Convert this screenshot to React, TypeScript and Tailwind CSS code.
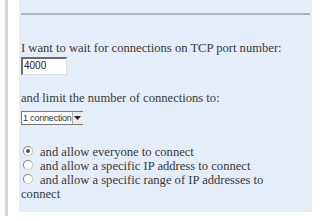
export default function App() {
  return (
    <div className="w-[323px] h-[221px] bg-white flex" style={{ fontFamily: '"Liberation Serif", serif' }}>
      <div className="w-[5px]" />
      <div className="w-[3px] h-[216px] bg-[#d4d4d4]" />
      <div className="w-[11px]" />
      <div className="w-[293px] h-[212px] bg-[#e5edf9] flex flex-col text-[12.6px] leading-[14px] text-[#3a3a3a]">
        <div className="mt-[13px] mx-[2px] h-[2px] bg-[#a9b4c0]" />
        <div className="mt-[26px] pl-[2px] whitespace-nowrap">I want to wait for connections on TCP port number:</div>
        <div className="mt-[2px] ml-[2px] w-[46px] h-[18px] bg-white border-t-[2px] border-l-[2px] border-t-[#6b6b6b] border-l-[#6b6b6b] border-b border-r border-b-[#e0e0e0] border-r-[#e0e0e0] text-[10px] leading-[14px] pl-[1px] text-[#222]" style={{ fontFamily: '"Liberation Sans", sans-serif' }}>
          4000
        </div>
        <div className="mt-[16px] pl-[2px] whitespace-nowrap">and limit the number of connections to:</div>
        <div className="mt-[6px] ml-[2px] w-[62px] h-[14px] bg-white border border-[#7a7a7a] flex items-center text-[9px] leading-[12px] text-[#333]" style={{ fontFamily: '"Liberation Sans", sans-serif' }}>
          <span className="pl-[1px] flex-1 whitespace-nowrap tracking-[-0.2px]">1 connection</span>
          <span className="w-[11px] h-[12px] shrink-0 bg-[#ececec] border-l border-[#b0b0b0] flex items-center justify-center">
            <svg width="7" height="4" viewBox="0 0 7 4"><path d="M0 0h7L3.5 4z" fill="#222" /></svg>
          </span>
        </div>
        <div className="mt-[20px] flex flex-col">
          {[
            'and allow everyone to connect',
            'and allow a specific IP address to connect',
            'and allow a specific range of IP addresses to',
          ].map((t, i) => (
            <div key={i} className="flex items-center h-[14px] pl-[3px] whitespace-nowrap">
              <span className="w-[10px] h-[10px] shrink-0 rounded-full border border-[#c4c4c4] border-t-[#8a8a8a] border-l-[#8a8a8a] bg-white flex items-center justify-center ml-[1px] mr-[7px] mt-[-2px]">
                {i === 0 && <span className="w-[4px] h-[4px] rounded-full bg-[#555]" />}
              </span>
              <span>{t}</span>
            </div>
          ))}
          <div className="pl-[2px]">connect</div>
        </div>
      </div>
    </div>
  )
}
